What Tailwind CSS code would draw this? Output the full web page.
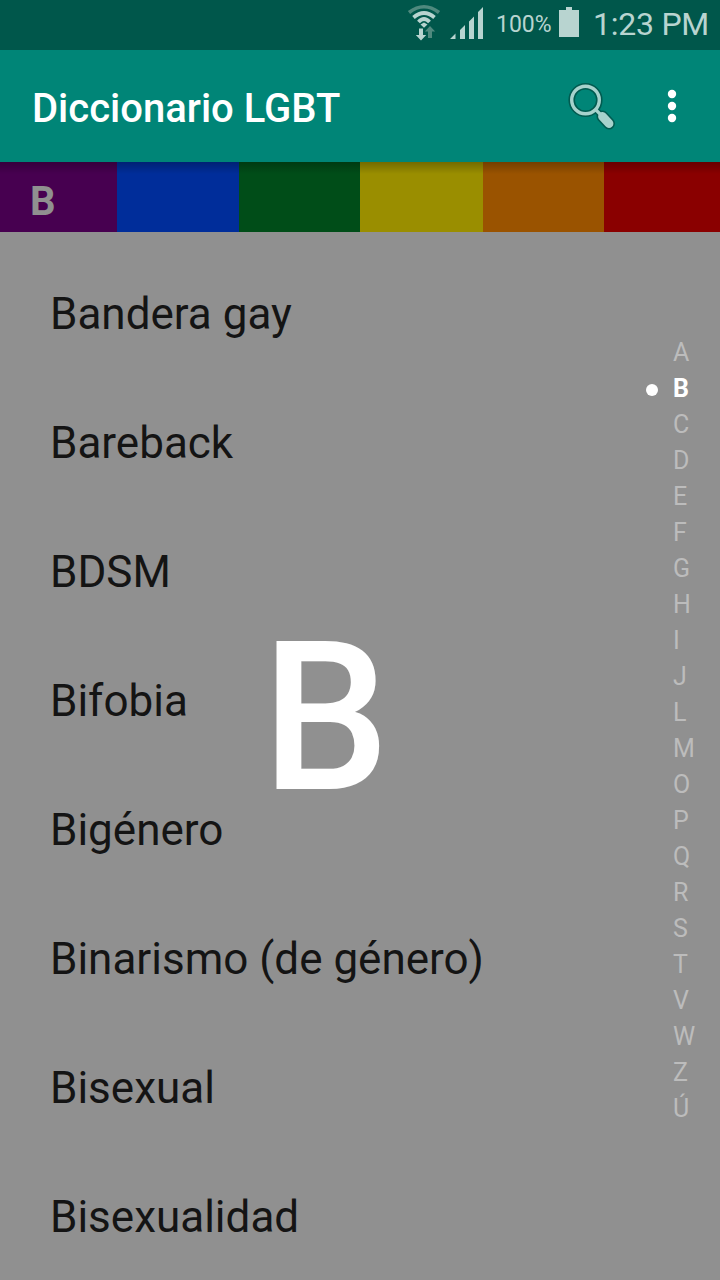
<!DOCTYPE html>
<html lang="es">
<head>
  <meta charset="UTF-8" />
  <meta name="viewport" content="width=device-width, initial-scale=1.0"/>
  <title>Diccionario LGBT</title>
  <script src="https://cdn.jsdelivr.net/npm/@tailwindcss/browser@4"></script>
</head>
<body class="font-['Roboto',sans-serif] bg-[#909090]">
  <div class="relative w-[720px] h-[1280px] overflow-hidden flex flex-col bg-[#909090]">

    <!-- Status bar -->
    <div class="h-[50px] shrink-0 bg-[#00574b] text-[#b8d4d0] flex items-center">
      <svg class="ml-[406px] shrink-0" width="36" height="50" viewBox="0 0 36 50" fill="none">
        <path d="M3 12.500Q18 1 33 12.500" stroke="#4f897e" stroke-width="3.600"/>
        <path d="M7.500 17.500Q18 8.500 28.500 17.500M12.500 22Q18 16 23.500 22" stroke="#b8d4d0" stroke-width="3.800"/>
        <path d="M18 22.500l3.500 2-3.500 3.200-3.500-3.200z" fill="#b8d4d0"/>
        <path d="M13 28.500h4v6.500h3.200L15 40.500 9.800 35H13z" fill="#b8d4d0"/>
        <path d="M22 38h4v-6.500h3.200L24 26l-5.200 5.500H22z" fill="#4f897e"/>
      </svg>
      <svg class="ml-2 shrink-0" width="34" height="50" viewBox="0 0 34 50" fill="#b8d4d0">
        <path d="M0 39l5.500-5.500V39zM10 30l5-5v14h-5zM19 21.500l5-5V39h-5zM28 12l5-5v32h-5z"/>
      </svg>
      <span class="ml-[12px] w-[56px] text-[23px] leading-[48px]">100%</span>
      <svg class="ml-[7px] shrink-0" width="20" height="50" viewBox="0 0 20 50" fill="#b8d4d0">
        <path d="M7 7h6v3h7v27H0V10h7z"/>
      </svg>
      <span class="ml-[14px] pb-[2px] text-[32px] leading-[48px] tracking-[-0.25px] whitespace-nowrap">1:23 PM</span>
    </div>

    <!-- Toolbar -->
    <header class="h-[112px] shrink-0 bg-[#008577] text-white flex items-center">
      <h1 class="ml-8 pt-[6px] w-[536px] text-[40px] leading-[48px] font-medium whitespace-nowrap">Diccionario LGBT</h1>
      <svg class="shrink-0" width="50" height="50" viewBox="0 0 50 50" fill="none" stroke-linecap="round">
        <circle cx="17.500" cy="19" r="13.800" stroke="#005b50" stroke-width="6.600"/>
        <path d="M28 29l4 4" stroke="#005b50" stroke-width="6.400"/>
        <path d="M34.500 35.500l6.500 7" stroke="#005b50" stroke-width="12"/>
        <circle cx="17.500" cy="19" r="13.800" stroke="#a6d2cc" stroke-width="3.400"/>
        <path d="M28 29l4 4" stroke="#a6d2cc" stroke-width="3.200"/>
        <path d="M34.500 35.500l6.500 7" stroke="#a6d2cc" stroke-width="8.800"/>
      </svg>
      <svg class="ml-[46px]" width="16" height="40" viewBox="0 0 16 40" fill="currentColor">
        <circle cx="8" cy="8" r="4.200"/>
        <circle cx="8" cy="20" r="4.200"/>
        <circle cx="8" cy="32" r="4.200"/>
      </svg>
    </header>

    <!-- Section header -->
    <div class="relative h-[70px] shrink-0 flex">
      <div class="w-[117px] bg-[#470050] pl-[30px] pt-[7px] text-[40px] leading-[66px] font-bold text-[#909090]">B</div>
      <div class="w-[122px] bg-[#002d9a]"></div>
      <div class="w-[121px] bg-[#004d18]"></div>
      <div class="w-[123px] bg-[#9a8e00]"></div>
      <div class="w-[121px] bg-[#9a5300]"></div>
      <div class="grow bg-[#8a0000]"></div>
      <div class="absolute inset-x-0 top-0 h-3 bg-linear-to-b from-black/25 to-transparent"></div>
    </div>

    <!-- Terms and letter index -->
    <main class="flex grow justify-between">
      <ul class="pl-[50px] pt-[18px] text-[44px] leading-[129px] text-[#141414] whitespace-nowrap">
        <li>Bandera gay</li>
        <li>Bareback</li>
        <li>BDSM</li>
        <li>Bifobia</li>
        <li>Bigénero</li>
        <li>Binarismo (de género)</li>
        <li>Bisexual</li>
        <li>Bisexualidad</li>
      </ul>
      <ul class="w-[47px] pt-[103px] text-[25px] leading-9 text-[#bcbcbc]">
        <li>A</li>
        <li class="relative font-bold text-white">
          <span class="absolute -left-[27px] top-[13px] size-3 rounded-full bg-white"></span>B
        </li>
        <li>C</li>
        <li>D</li>
        <li>E</li>
        <li>F</li>
        <li>G</li>
        <li>H</li>
        <li>I</li>
        <li>J</li>
        <li>L</li>
        <li>M</li>
        <li>O</li>
        <li>P</li>
        <li>Q</li>
        <li>R</li>
        <li>S</li>
        <li>T</li>
        <li>V</li>
        <li>W</li>
        <li>Z</li>
        <li>Ú</li>
      </ul>
    </main>

    <!-- Current letter overlay -->
    <div class="absolute left-[262px] top-[618px] origin-left scale-x-97 text-[208px] leading-[200px] font-medium text-white">B</div>
  </div>
</body>
</html>
